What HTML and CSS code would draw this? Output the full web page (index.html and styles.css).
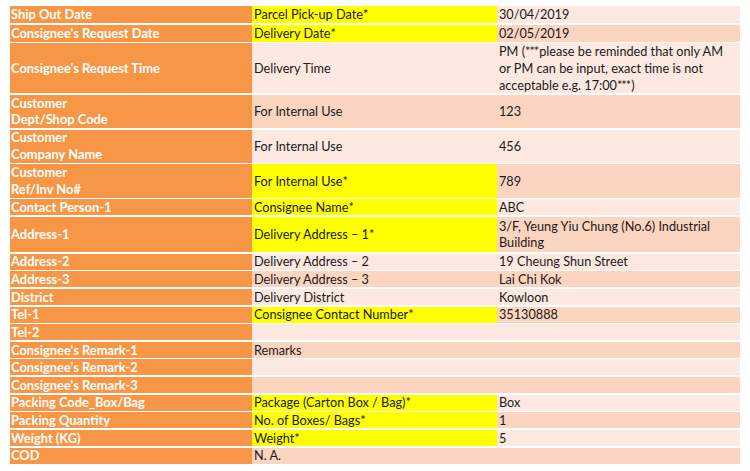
FILE: index.html
```html
<!DOCTYPE html>
<html>
<head>
<meta charset="utf-8">
<link rel="stylesheet" href="styles.css">
</head>
<body>
<div class="sheet">
  <div class="c k">Ship Out Date</div><div class="c y"><span>Parcel Pick-up Date<span class="ast">*</span></span></div><div class="c l">30/04/2019</div>
  <div class="c k">Consignee's Request Date</div><div class="c y"><span>Delivery Date<span class="ast">*</span></span></div><div class="c d">02/05/2019</div>
  <div class="c k">Consignee's Request Time</div><div class="c l">Delivery Time</div><div class="c l"><span>PM (<span class="ast">***</span>please be reminded that only AM<br>or PM can be input, exact time is not<br>acceptable e.g. 17:00<span class="ast">***</span>)</span></div>
  <div class="c k"><span>Customer<br>Dept/Shop Code</span></div><div class="c d">For Internal Use</div><div class="c d">123</div>
  <div class="c k"><span>Customer<br>Company Name</span></div><div class="c l">For Internal Use</div><div class="c l">456</div>
  <div class="c k"><span>Customer<br>Ref/Inv No#</span></div><div class="c y"><span>For Internal Use<span class="ast">*</span></span></div><div class="c d">789</div>
  <div class="c k">Contact Person-1</div><div class="c y"><span>Consignee Name<span class="ast">*</span></span></div><div class="c l">ABC</div>
  <div class="c k">Address-1</div><div class="c y"><span>Delivery Address – 1<span class="ast">*</span></span></div><div class="c d"><span>3/F, Yeung Yiu Chung (No.6) Industrial<br>Building</span></div>
  <div class="c k">Address-2</div><div class="c l">Delivery Address – 2</div><div class="c l">19 Cheung Shun Street</div>
  <div class="c k">Address-3</div><div class="c d">Delivery Address – 3</div><div class="c d">Lai Chi Kok</div>
  <div class="c k">District</div><div class="c l">Delivery District</div><div class="c l">Kowloon</div>
  <div class="c k">Tel-1</div><div class="c y"><span>Consignee Contact Number<span class="ast">*</span></span></div><div class="c d">35130888</div>
  <div class="c k">Tel-2</div><div class="c l"></div><div class="c l"></div>
  <div class="c k">Consignee's Remark-1</div><div class="c d">Remarks</div><div class="c d"></div>
  <div class="c k">Consignee's Remark-2</div><div class="c l"></div><div class="c l"></div>
  <div class="c k">Consignee's Remark-3</div><div class="c d"></div><div class="c d"></div>
  <div class="c k">Packing Code_Box/Bag</div><div class="c y"><span>Package (Carton Box / Bag)<span class="ast">*</span></span></div><div class="c l">Box</div>
  <div class="c k">Packing Quantity</div><div class="c y"><span>No. of Boxes/ Bags<span class="ast">*</span></span></div><div class="c d">1</div>
  <div class="c k">Weight (KG)</div><div class="c y"><span>Weight<span class="ast">*</span></span></div><div class="c l">5</div>
  <div class="c k">COD</div><div class="c d">N. A.</div><div class="c d"></div>
</div>
</body>
</html>
```
FILE: styles.css
```css
html, body {
  margin: 0;
  padding: 0;
  background: #ffffff;
}
body {
  padding: 6px 10px;
  font-family: Lato, "Liberation Sans", sans-serif;
  font-size: 12.7px;
  color: #1a1a1a;
}
.sheet {
  display: grid;
  grid-template-columns: 242px 245px 243px;
  grid-template-rows: 17px 17px 50px 33px 33px 33.5px 16px 35px repeat(12, 16px);
  row-gap: 1.65px;
}
.c {
  display: flex;
  align-items: center;
  padding-left: 1px;
  line-height: 16.6px;
  white-space: nowrap;
  overflow: hidden;
}
.k {
  background: #f79646;
  color: #ffffff;
  font-weight: bold;
  font-size: 12.9px;
}
.y {
  background: #ffff00;
  padding-left: 2px;
}
.l {
  background: #fde9e1;
  padding-left: 2px;
}
.d {
  background: #fbd5c0;
  padding-left: 2px;
}
.ast {
  letter-spacing: -1px;
  margin-right: 1px;
}
```
